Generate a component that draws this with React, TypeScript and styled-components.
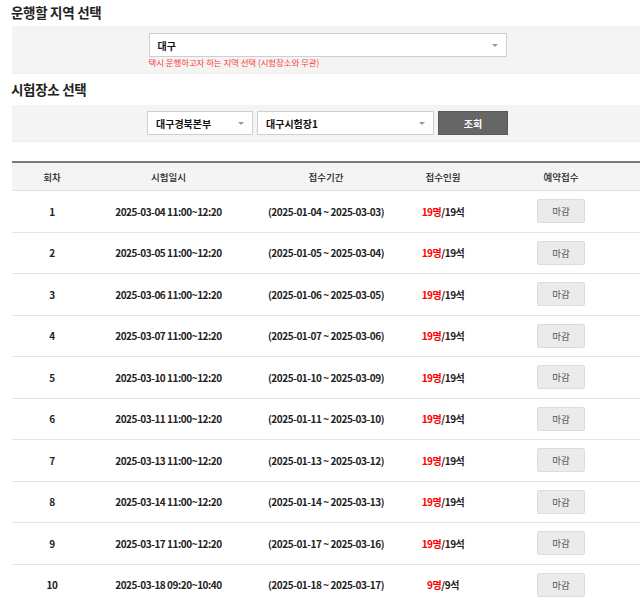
import React from "react";
import styled, { createGlobalStyle } from "styled-components";

const Global = createGlobalStyle`
  html, body { margin: 0; padding: 0; background: #fff; overflow: hidden; }
  body { font-family: "Noto Sans CJK KR", "Noto Sans", sans-serif; color: #222; }
`;

const Page = styled.div`
  width: 631px;
  margin-left: 12px;
  padding-top: 2px;
`;

const Heading = styled.h2<{ $top?: number; $bottom?: number }>`
  margin: ${(p) => p.$top ?? 0}px 0 ${(p) => p.$bottom ?? 4}px -1px;
  font-size: 13.5px;
  line-height: 20px;
  font-weight: 700;
  color: #222;
  letter-spacing: -0.3px;
`;

const FilterBox = styled.div<{ $pad: string }>`
  background: #f4f4f4;
  border-bottom: 1px solid #ececec;
  padding: ${(p) => p.$pad};
  display: flex;
  justify-content: center;
`;

const Column = styled.div`
  width: 358px;
  display: flex;
  flex-direction: column;
`;

const Row = styled.div`
  display: flex;
  gap: 4px;
`;

const Select = styled.div<{ $w: number }>`
  position: relative;
  box-sizing: border-box;
  width: ${(p) => p.$w}px;
  height: 24px;
  background: #fff;
  border: 1px solid #cfcfcf;
  padding-left: 8px;
  display: flex;
  align-items: center;
  font-size: 10px;
  font-weight: 700;
  color: #111;
  &::after {
    content: "";
    position: absolute;
    right: 8px;
    top: 10px;
    border-left: 3px solid transparent;
    border-right: 3px solid transparent;
    border-top: 3px solid #999;
  }
`;

const Hint = styled.div`
  font-size: 8.5px;
  line-height: 11px;
  margin-top: 0;
  color: #ff3b3b;
  letter-spacing: -0.1px;
`;

const SearchButton = styled.button`
  box-sizing: border-box;
  width: 70px;
  height: 24px;
  background: #666;
  border: 1px solid #5a5a5a;
  color: #fff;
  font-family: inherit;
  font-size: 10px;
  font-weight: 700;
  padding: 0;
`;

const Table = styled.div`
  margin-top: 19px;
  border-top: 2px solid #7a7a7a;
`;

const cols = "80px 153px 162px 72px 164px";

const HeadRow = styled.div`
  display: grid;
  grid-template-columns: ${cols};
  height: 27px;
  align-items: center;
  background: #f4f4f4;
  border-bottom: 1px solid #e2e2e2;
  font-size: 9.5px;
  font-weight: 500;
  color: #222;
  text-align: center;
`;

const BodyRow = styled.div`
  display: grid;
  grid-template-columns: ${cols};
  height: 40.5px;
  align-items: center;
  border-bottom: 1px solid #e4e4e4;
  font-size: 10px;
  font-weight: 700;
  color: #222;
  text-align: center;
  letter-spacing: -0.45px;
`;

const Cell = styled.div`
  display: flex;
  justify-content: center;
  align-items: center;
`;

const Red = styled.span`
  color: #ff0000;
`;

const ClosedButton = styled.button`
  box-sizing: border-box;
  width: 48px;
  height: 24px;
  background: #ebebeb;
  border: 1px solid #dcdcdc;
  border-radius: 2px;
  color: #555;
  font-family: inherit;
  font-size: 9.5px;
  padding: 0;
`;

const rows = [
  { n: 1, d: "2025-03-04 11:00~12:20", p: "(2025-01-04 ~ 2025-03-03)", a: 19, t: 19 },
  { n: 2, d: "2025-03-05 11:00~12:20", p: "(2025-01-05 ~ 2025-03-04)", a: 19, t: 19 },
  { n: 3, d: "2025-03-06 11:00~12:20", p: "(2025-01-06 ~ 2025-03-05)", a: 19, t: 19 },
  { n: 4, d: "2025-03-07 11:00~12:20", p: "(2025-01-07 ~ 2025-03-06)", a: 19, t: 19 },
  { n: 5, d: "2025-03-10 11:00~12:20", p: "(2025-01-10 ~ 2025-03-09)", a: 19, t: 19 },
  { n: 6, d: "2025-03-11 11:00~12:20", p: "(2025-01-11 ~ 2025-03-10)", a: 19, t: 19 },
  { n: 7, d: "2025-03-13 11:00~12:20", p: "(2025-01-13 ~ 2025-03-12)", a: 19, t: 19 },
  { n: 8, d: "2025-03-14 11:00~12:20", p: "(2025-01-14 ~ 2025-03-13)", a: 19, t: 19 },
  { n: 9, d: "2025-03-17 11:00~12:20", p: "(2025-01-17 ~ 2025-03-16)", a: 19, t: 19 },
  { n: 10, d: "2025-03-18 09:20~10:40", p: "(2025-01-18 ~ 2025-03-17)", a: 9, t: 9 },
];

export default function App() {
  return (
    <>
      <Global />
      <Page>
        <Heading>운행할 지역 선택</Heading>
        <FilterBox $pad="7px 0 5px">
          <Column>
            <Select $w={358}>대구</Select>
            <Hint>택시 운행하고자 하는 지역 선택 (시험장소와 무관)</Hint>
          </Column>
        </FilterBox>
        <Heading $top={5} $bottom={6}>시험장소 선택</Heading>
        <FilterBox $pad="6px 0 6px">
          <Row>
            <Select $w={106}>대구경북본부</Select>
            <Select $w={177}>대구시험장1</Select>
            <SearchButton>조회</SearchButton>
          </Row>
        </FilterBox>
        <Table>
          <HeadRow>
            <Cell>회차</Cell>
            <Cell>시험일시</Cell>
            <Cell>접수기간</Cell>
            <Cell>접수인원</Cell>
            <Cell>예약접수</Cell>
          </HeadRow>
          {rows.map((r) => (
            <BodyRow key={r.n}>
              <Cell>{r.n}</Cell>
              <Cell>{r.d}</Cell>
              <Cell>{r.p}</Cell>
              <Cell>
                <Red>{r.a}명</Red>/{r.t}석
              </Cell>
              <Cell>
                <ClosedButton>마감</ClosedButton>
              </Cell>
            </BodyRow>
          ))}
        </Table>
      </Page>
    </>
  );
}
